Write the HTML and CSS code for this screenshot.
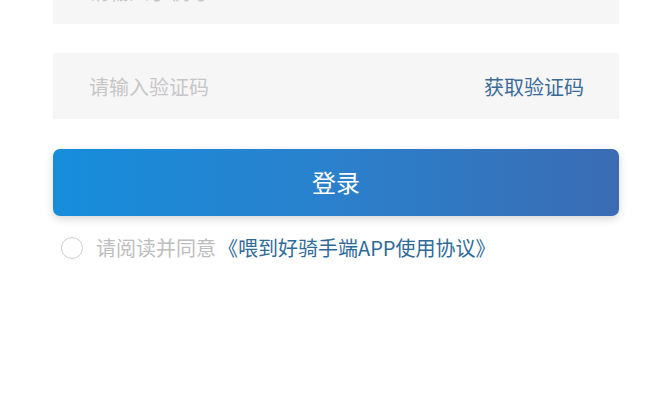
FILE: index.html
```html
<!DOCTYPE html>
<html lang="zh-CN">
<head>
    <meta charset="UTF-8">
    <meta name="viewport" content="width=device-width, initial-scale=1.0">
    <title>登录</title>
    <link rel="stylesheet" href="styles.css">
</head>
<body>

<div class="login-form">
    <div class="field">
        <input type="text" class="field-input" placeholder="请输入手机号">
    </div>
    <div class="field">
        <input type="text" class="field-input" placeholder="请输入验证码">
        <span class="code-link">获取验证码</span>
    </div>
    <button class="login-button">登录</button>
    <div class="agree">
        <span class="agree-check"></span>
        <span class="agree-text">请阅读并同意</span>
        <span class="agree-link">《喂到好骑手端APP使用协议》</span>
    </div>
</div>

</body>
</html>
```

FILE: styles.css
```css
body {
    font-family: "Noto Sans CJK SC", "Noto Sans", sans-serif;
    background-color: #ffffff;
    margin: 0;
}
.login-form {
    display: flex;
    flex-direction: column;
    padding: 0 51px 0 53px;
    margin-top: -42px;
}
.field {
    display: flex;
    align-items: center;
    height: 66px;
    background-color: #f6f6f6;
    margin-bottom: 29px;
    padding: 0 35px 0 36px;
}
.field-input {
    flex: 1;
    min-width: 0;
    border: none;
    outline: none;
    background: transparent;
    font-family: inherit;
    font-size: 20px;
    color: #333;
    padding: 0;
}
.field-input::placeholder {
    color: #c6c6c6;
}
.code-link {
    color: #3a6b96;
    font-size: 20px;
    white-space: nowrap;
}
.login-button {
    height: 67px;
    margin-top: 1px;
    border: none;
    border-radius: 7px;
    background: linear-gradient(to right, #168ddb, #2b80cc 50%, #3a6cb3);
    box-shadow: 0 3px 8px rgba(0, 0, 0, 0.16);
    color: #ffffff;
    font-family: inherit;
    font-size: 24px;
    padding: 0 0 3px;
    cursor: pointer;
}
.agree {
    display: flex;
    align-items: center;
    margin-top: 17px;
    padding-left: 8px;
    font-size: 20px;
}
.agree-check {
    width: 20px;
    height: 20px;
    border: 1px solid #cdcdcd;
    border-radius: 50%;
    margin-right: 13px;
}
.agree-text {
    color: #bdbdbd;
    margin-right: 2px;
}
.agree-link {
    color: #2f6b98;
}
```
